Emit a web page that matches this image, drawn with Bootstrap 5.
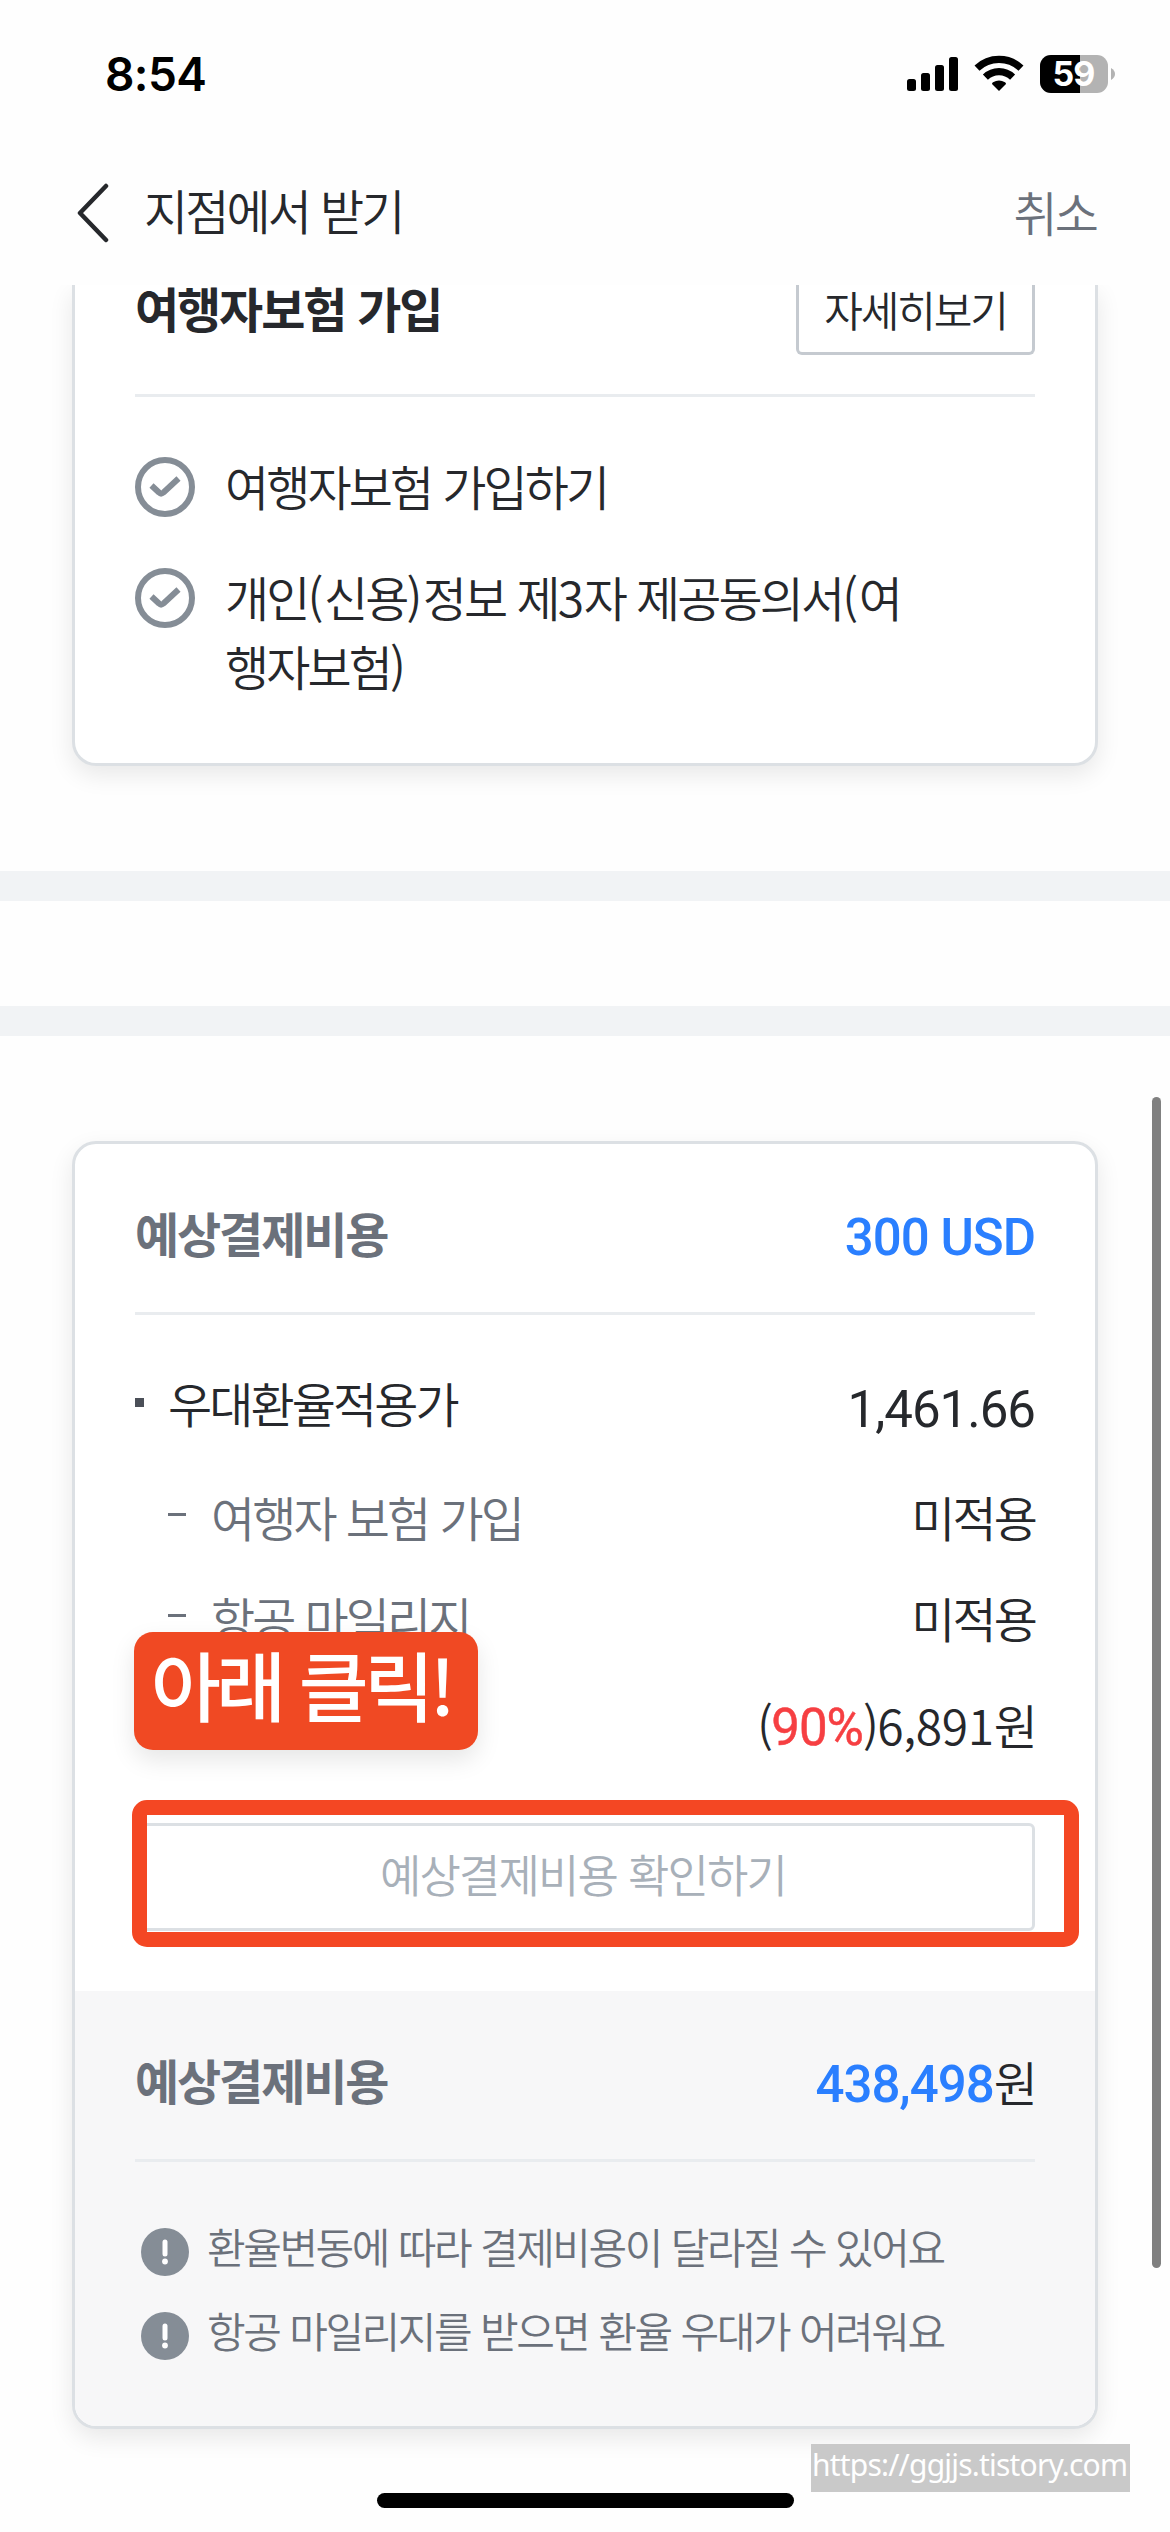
<!DOCTYPE html>
<html lang="ko">
<head>
<meta charset="utf-8">
<meta name="viewport" content="width=device-width, initial-scale=1">
<title>지점에서 받기</title>
<link href="https://cdn.jsdelivr.net/npm/bootstrap@5.3.0/dist/css/bootstrap.min.css" rel="stylesheet">
<style>
  body{font-family:"Noto Sans CJK KR",sans-serif;font-size:48px;font-weight:350;line-height:69px;letter-spacing:-2.9px;word-spacing:.5px;color:#26282c;background:#fff}
  .screen{width:1170px;height:2532px;background:#fefefe}
  .status{height:148px;padding:0 55px 0 105px}
  .clock{font:600 46px/1 Inter,sans-serif;letter-spacing:-.6px;color:#000;word-spacing:0}
  .topbar{height:137px;padding:0 74px 14px 77px;background:#fefefe}
  .topbar svg{margin-top:7px}
  .topbar h1{font-size:48px;font-weight:350;line-height:69px;margin:0 0 0 35px}
  .tone{color:#6b717b}
  .panel{margin:0 72px;padding:0 60px;border:3px solid #dce0e4;border-radius:24px;box-shadow:0 9px 24px rgba(0,0,0,.09);background:#fff}
  .panel-cut{border-top:0;border-top-left-radius:0;border-top-right-radius:0;padding-bottom:63px}
  .rule{height:3px;background:#e9ecef}
  .ttl{font-size:48px;font-weight:700;line-height:69px;letter-spacing:-2.1px;margin:0}
  .ttl-cut{margin-top:-12px}
  .more{width:239px;height:70px;border:3px solid #c5cad0;border-top:0;border-radius:0 0 6px 6px;font-size:42px;line-height:48px;letter-spacing:-2.1px}
  .agree{padding-top:54px;gap:42px}
  .agree svg{margin-top:6px}
  .agree div div{padding-left:6px}
  .paren{letter-spacing:.5px}
  .digits{letter-spacing:-.4px}
  .snug{letter-spacing:-1.5px}
  .band{height:30px;background:#f1f3f5}
  .head{height:160px;margin-top:8px}
  .num{font-family:Roboto,"Noto Sans CJK KR",sans-serif;font-size:51px;font-weight:500;letter-spacing:-1px;word-spacing:0;padding-top:10px}
  .rate{padding-top:13px}
  .blue{color:#2a7fff}
  .red{font-family:Roboto,sans-serif;font-weight:400;font-size:51px;letter-spacing:-1px;color:#f63f42;-webkit-text-stroke:.5px #f63f42}
  .sq{width:9px;height:9px;background:#4b4f58;margin-right:24px}
  .dash{width:18px;height:3px;background:#6b717b;margin:0 25px 4px 33px}
  .confirm{height:108px;border:3px solid #dce0e4;border-radius:6px;font-size:45px;letter-spacing:-1.9px;padding:0 4px 8px 0;color:#a8b0b9;background:#fff}
  .frame{left:-3px;top:-23px;width:947px;height:147px;border:15px solid #f44723;border-radius:15px}
  .tip{left:-1px;top:49px;width:344px;height:118px;border-radius:19px;background:#f04923;color:#fff;font-size:76px;font-weight:500;line-height:102px;letter-spacing:-4.6px;padding-left:17px;box-shadow:0 10px 24px rgba(0,0,0,.1);white-space:nowrap}
  .total{margin:60px -60px 0;padding:0 60px 66px;background:#f7f7f8;border-radius:0 0 21px 21px;display:flow-root}
  .notes{padding-top:54px;gap:24px}
  .note{height:60px;font-size:42px;line-height:60px;letter-spacing:-2.45px;color:#6b717b}
  .note svg{margin:12px 18px 0 6px}
  .thumb{left:1152px;top:1097px;width:9px;height:1171px;border-radius:5px;background:#808080}
  .homebar{left:377px;top:2493px;width:417px;height:15px;border-radius:8px;background:#000}
  .mark-url{left:811px;top:2444px;width:319px;height:48px;background:#c9c9c9;color:#fff;font:400 30px/42px "Noto Sans",sans-serif;letter-spacing:-.8px;word-spacing:0;padding-left:1px;white-space:nowrap}
</style>
<script src="https://cdn.jsdelivr.net/npm/bootstrap@5.3.0/dist/js/bootstrap.bundle.min.js"></script>
</head>
<body>
<div class="screen position-relative overflow-hidden">
  <div class="status d-flex justify-content-between align-items-center">
    <span class="clock">8:54</span>
    <svg width="208" height="38" viewBox="0 0 208 38">
      <rect x="0" y="24" width="9" height="12" rx="2.5"/><rect x="14" y="18" width="9" height="18" rx="2.5"/><rect x="28" y="10" width="9" height="26" rx="2.5"/><rect x="42" y="2" width="9" height="34" rx="2.5"/>
      <g fill="none" stroke="#000" stroke-width="7.2"><path d="M70 13.2A32 32 0 0 1 114 13.2"/><path d="M78.4 22.2A19.5 19.5 0 0 1 105.600 22.2"/></g>
      <path d="M92 36L85 29Q85 28 86 27.300Q92 23.800 98 27.300Q99 28 99 29Z"/>
      <rect x="133" y="0" width="68" height="38" rx="11" fill="#b3b3b3"/>
      <path d="M144 0H173V38H144A11 11 0 0 1 133 27V11A11 11 0 0 1 144 0Z"/>
      <path d="M204 13Q208 15.500 208 19T204 25Z" fill="#b3b3b3"/>
      <text x="166.500" y="31" text-anchor="middle" fill="#fff" font-family="Inter" font-weight="700" font-size="34" letter-spacing="-1">59</text>
    </svg>
  </div>
  <nav class="topbar d-flex align-items-center position-relative z-1">
    <svg width="32" height="60" viewBox="0 0 32 60" fill="none" stroke="#26282c" stroke-width="4.500" stroke-linecap="round" stroke-linejoin="round"><path d="M29 3L3 30L29 57"/></svg>
    <h1>지점에서 받기</h1>
    <span class="tone ms-auto pt-1">취소</span>
  </nav>

  <section class="panel panel-cut">
    <div class="d-flex justify-content-between">
      <h2 class="ttl ttl-cut">여행자보험 가입</h2>
      <div class="more text-center">자세히보기</div>
    </div>
    <div class="rule" style="margin-top:39px"></div>
    <div class="agree d-flex flex-column">
      <div class="d-flex">
        <svg class="flex-shrink-0 me-4" width="60" height="60" fill="none" stroke="#858d96" stroke-width="6"><circle cx="30" cy="30" r="27"/><path d="M16.500 28.500L24 35.500Q26 37.500 28.500 35.500L43.500 21.500"/></svg>
        <div>여행자보험 가입하기</div>
      </div>
      <div class="d-flex">
        <svg class="flex-shrink-0 me-4" width="60" height="60" fill="none" stroke="#858d96" stroke-width="6"><circle cx="30" cy="30" r="27"/><path d="M16.500 28.500L24 35.500Q26 37.500 28.500 35.500L43.500 21.500"/></svg>
        <div>개인<span class="paren">(</span>신용<span class="paren">)</span>정보 제<span class="digits">3</span>자 제공동의서<span class="paren">(</span>여<br>행자보험<span class="paren">)</span></div>
      </div>
    </div>
  </section>

  <div class="band" style="margin-top:105px"></div>
  <div class="band" style="margin:105px 0"></div>

  <section class="panel">
    <div class="head d-flex justify-content-between align-items-center">
      <h2 class="ttl tone">예상결제비용</h2>
      <span class="num blue">300 USD</span>
    </div>
    <div class="rule"></div>
    <div class="d-flex align-items-center" style="height:69px;margin-top:53px">
      <span class="sq"></span><span>우대환율적용가</span>
      <span class="num rate ms-auto fw-normal">1,461.66</span>
    </div>
    <div class="d-flex align-items-center" style="margin-top:45px">
      <span class="dash"></span><span class="tone">여행자 보험 가입</span><span class="ms-auto">미적용</span>
    </div>
    <div class="d-flex align-items-center position-relative" style="margin-top:32px">
      <span class="dash"></span><span class="tone">항공 마일리지</span><span class="ms-auto">미적용</span>
      <div class="tip position-absolute">아래 클릭!</div>
    </div>
    <div class="text-end" style="height:69px;margin-top:38px"><span class="snug">(</span><span class="red">90%</span><span class="snug">)</span><span class="digits">6,891</span>원</div>
    <div class="position-relative" style="margin-top:64px">
      <div class="confirm d-flex align-items-center justify-content-center">예상결제비용 확인하기</div>
      <div class="frame position-absolute"></div>
    </div>
    <div class="total">
      <div class="head d-flex justify-content-between align-items-center">
        <h2 class="ttl tone">예상결제비용</h2>
        <span class="pt-2"><span class="num blue">438,498</span>원</span>
      </div>
      <div class="rule"></div>
      <div class="notes d-flex flex-column">
        <div class="note d-flex align-items-center">
          <svg width="48" height="48"><circle cx="24" cy="24" r="24" fill="#858d96"/><path d="M24 14V26" stroke="#fff" stroke-width="5" stroke-linecap="round"/><circle cx="24" cy="33.500" r="2.900" fill="#fff"/></svg>
          <span>환율변동에 따라 결제비용이 달라질 수 있어요</span>
        </div>
        <div class="note d-flex align-items-center">
          <svg width="48" height="48"><circle cx="24" cy="24" r="24" fill="#858d96"/><path d="M24 14V26" stroke="#fff" stroke-width="5" stroke-linecap="round"/><circle cx="24" cy="33.500" r="2.900" fill="#fff"/></svg>
          <span>항공 마일리지를 받으면 환율 우대가 어려워요</span>
        </div>
      </div>
    </div>
  </section>

  <div class="thumb position-absolute"></div>
  <div class="homebar position-absolute"></div>
  <div class="mark-url position-absolute">https://ggjjs.tistory.com</div>
</div>
</body>
</html>
